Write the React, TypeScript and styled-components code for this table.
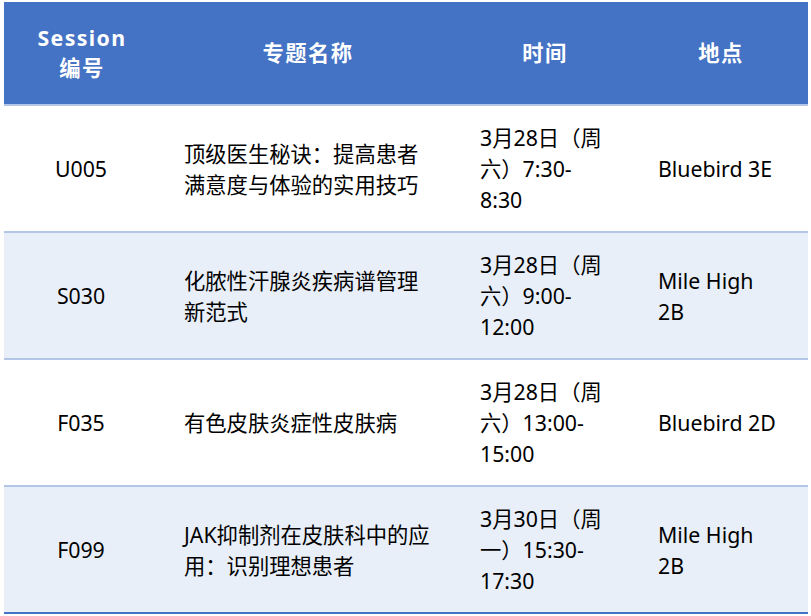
import * as React from 'react';
import styled, { createGlobalStyle } from 'styled-components';

const GlobalStyle = createGlobalStyle`
  body {
    margin: 0;
    background: #ffffff;
  }
`;

const Page = styled.div`
  padding: 2px 3px 0 4px;
  font-family: "Noto Sans", "Noto Sans CJK SC", sans-serif;
`;

const Table = styled.table`
  width: 804px;
  border-collapse: collapse;
  table-layout: fixed;
`;

const HeadCell = styled.th`
  background: #4472c4;
  color: #ffffff;
  font-weight: 700;
  font-size: 21.3px;
  line-height: 30px;
  letter-spacing: 1.4px;
  height: 102px;
  padding: 0;
  text-align: center;
  vertical-align: middle;
  border-bottom: 2px solid #b4c6e7;
`;

const Row = styled.tr<{ $alt: boolean; $last: boolean }>`
  background: ${(p) => (p.$alt ? '#e9eff8' : '#ffffff')};
  border-bottom: 2px solid ${(p) => (p.$last ? '#4472c4' : '#b4c6e7')};
`;

const Cell = styled.td<{ $center?: boolean }>`
  height: 127px;
  padding: 0 26px 0 24px;
  box-sizing: border-box;
  color: #000000;
  font-size: 21.3px;
  line-height: 31px;
  text-align: ${(p) => (p.$center ? 'center' : 'left')};
  vertical-align: middle;
`;

const sessions = [
  { id: 'U005', topic: '顶级医生秘诀：提高患者满意度与体验的实用技巧', time: '3月28日（周六）7:30-8:30', place: 'Bluebird 3E' },
  { id: 'S030', topic: '化脓性汗腺炎疾病谱管理新范式', time: '3月28日（周六）9:00-12:00', place: 'Mile High 2B' },
  { id: 'F035', topic: '有色皮肤炎症性皮肤病', time: '3月28日（周六）13:00-15:00', place: 'Bluebird 2D' },
  { id: 'F099', topic: 'JAK抑制剂在皮肤科中的应用：识别理想患者', time: '3月30日（周一）15:30-17:30', place: 'Mile High 2B' },
];

const App: React.FunctionComponent = () => {
  return (
    <Page>
      <GlobalStyle />
      <Table>
        <colgroup>
          <col style={{ width: 156 }} />
          <col style={{ width: 296 }} />
          <col style={{ width: 178 }} />
          <col style={{ width: 174 }} />
        </colgroup>
        <thead>
          <tr>
            <HeadCell>Session<br />编号</HeadCell>
            <HeadCell>专题名称</HeadCell>
            <HeadCell>时间</HeadCell>
            <HeadCell>地点</HeadCell>
          </tr>
        </thead>
        <tbody>
          {sessions.map((s, i) => (
            <Row key={s.id} $alt={i % 2 === 1} $last={i === sessions.length - 1}>
              <Cell $center>{s.id}</Cell>
              <Cell>{s.topic}</Cell>
              <Cell>{s.time}</Cell>
              <Cell>{s.place}</Cell>
            </Row>
          ))}
        </tbody>
      </Table>
    </Page>
  );
};

export default App;
